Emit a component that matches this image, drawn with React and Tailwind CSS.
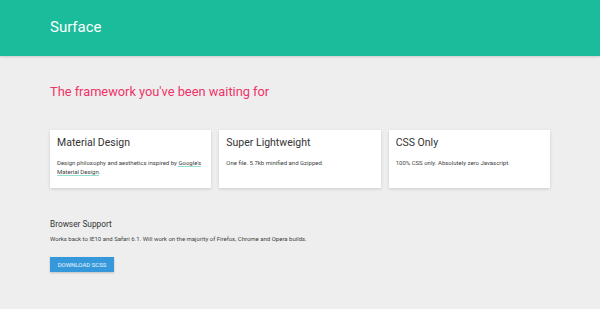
export default function App() {
  const cards = [
    {
      title: "Material Design",
      body: (
        <>
          Design philosophy and aesthetics inspired by{" "}
          <a className="border-b border-[#8fe0cf] text-[#424242]">Google's</a>{" "}
          <a className="border-b border-[#8fe0cf] text-[#424242]">Material Design</a>.
        </>
      ),
    },
    { title: "Super Lightweight", body: "One file. 5.7kb minified and Gzipped." },
    { title: "CSS Only", body: "100% CSS only. Absolutely zero Javascript." },
  ];
  return (
    <div className="min-h-[309px] bg-[#eeeeee] font-['Roboto',sans-serif] text-[#424242]">
      <header className="flex h-[56px] items-center bg-[#1abc9c] pb-[1px] pl-[50px] shadow-[0_1px_2px_rgba(0,0,0,0.15)]">
        <span className="text-[15px] text-white">Surface</span>
      </header>
      <main className="mx-[50px] w-[500px]">
        <h1 className="mt-[29px] text-[12.8px] leading-[13px] text-[#ee3369]">The framework you've been waiting for</h1>
        <div className="mt-[32px] grid grid-cols-3 gap-[8px]">
          {cards.map((c) => (
            <div key={c.title} className="h-[58px] bg-white px-[7px] pt-[7px] shadow-[0_1px_3px_rgba(0,0,0,0.15)]">
              <h2 className="text-[10.5px] leading-[12px] text-[#333333]">{c.title}</h2>
              <p className="mt-[9px] text-[6px] leading-[9px]">{c.body}</p>
            </div>
          ))}
        </div>
        <h3 className="mt-[31px] text-[8.3px] leading-[10px] text-[#333333]">Browser Support</h3>
        <p className="mt-[6px] text-[6px] leading-[8px]">
          Works back to IE10 and Safari 6.1. Will work on the majority of Firefox, Chrome and Opera builds.
        </p>
        <button className="mt-[14px] flex h-[15px] w-[64px] items-center justify-center bg-[#3498db] text-[6px] text-white/90 shadow-[0_1px_2px_rgba(0,0,0,0.2)]">
          DOWNLOAD SCSS
        </button>
      </main>
    </div>
  );
}
